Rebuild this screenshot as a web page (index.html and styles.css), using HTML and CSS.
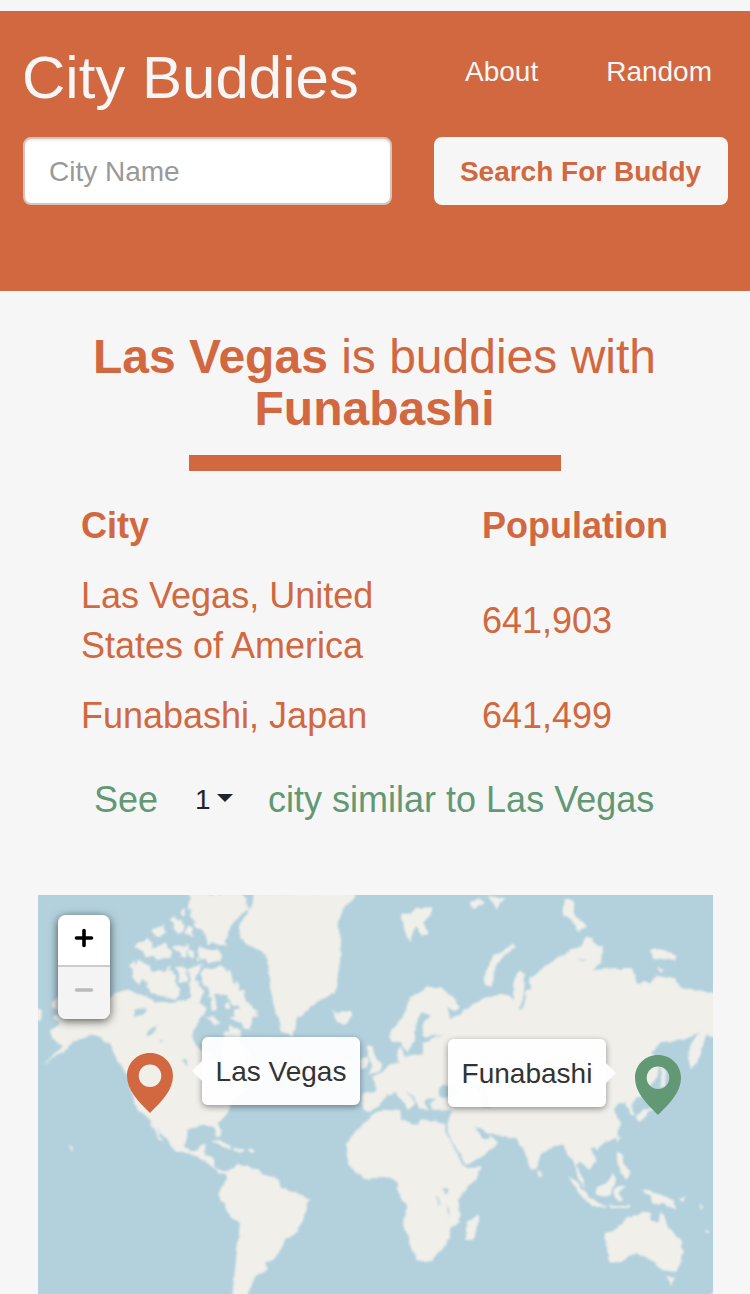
FILE: index.html
```html
<!DOCTYPE html>
<html lang="en">
<head>
<meta charset="utf-8">
<title>City Buddies</title>
<link rel="stylesheet" href="styles.css">
</head>
<body>
<header class="header">
  <div class="brand-row">
    <h1 class="brand">City Buddies</h1>
    <nav class="nav"><a class="nav-link" href="#">About</a><a class="nav-link" href="#">Random</a></nav>
  </div>
  <form class="search">
    <input class="search-input" type="text" placeholder="City Name">
    <button class="search-button" type="button">Search For Buddy</button>
  </form>
</header>
<main class="main">
  <h2 class="headline"><b>Las Vegas</b> is buddies with <b>Funabashi</b></h2>
  <hr class="rule">
  <div class="table">
    <div class="row row-head"><span>City</span><span>Population</span></div>
    <div class="row"><span class="city">Las Vegas, United States of America</span><span>641,903</span></div>
    <div class="row"><span class="city">Funabashi, Japan</span><span>641,499</span></div>
  </div>
  <div class="similar">
    <span>See</span>
    <button class="count" type="button">1<i class="caret"></i></button>
    <span>city similar to Las Vegas</span>
  </div>
  <section class="map">
    <svg class="world" viewBox="38 895 675 399" aria-hidden="true">
      <defs>
        <filter id="coast" x="0" y="880" width="750" height="430" filterUnits="userSpaceOnUse" color-interpolation-filters="sRGB">
          <feTurbulence type="fractalNoise" baseFrequency="0.12" numOctaves="2" seed="4" result="n"/>
          <feDisplacementMap in="SourceGraphic" in2="n" scale="5" xChannelSelector="R" yChannelSelector="G"/>
          <feGaussianBlur stdDeviation="0.9"/>
        </filter>
        <filter id="arctic" x="0" y="880" width="750" height="430" filterUnits="userSpaceOnUse" color-interpolation-filters="sRGB">
          <feTurbulence type="fractalNoise" baseFrequency="0.14" numOctaves="2" seed="9" result="n"/>
          <feDisplacementMap in="SourceGraphic" in2="n" scale="10" xChannelSelector="R" yChannelSelector="G"/>
          <feGaussianBlur stdDeviation="1"/>
        </filter>
      </defs>
      <rect class="sea" x="30" y="885" width="700" height="420"/>
      <g class="land" filter="url(#coast)">
        <!-- North and Central America -->
        <path d="M52 1002L62 995 80 992 97 994 110 997 118 992 126 990 138 993 151 999 160 1003 171 1003 181 1001 190 998 196 993 200 1002 206 1006 204 1014 195 1026 192 1036 195 1045 201 1050 213 1055 219 1068 223 1056 221 1046 226 1036 233 1035 245 1048 254 1062 258 1070 245 1076 240 1082 252 1088 240 1095 231 1104 228 1113 218 1123 222 1136 218 1137 213 1127 201 1125 188 1130 185 1145 191 1152 198 1150 200 1145 206 1144 205 1155 215 1158 214 1167 220 1171 228 1171 226 1174 219 1174 210 1166 205 1160 192 1156 175 1151 170 1145 168 1141 155 1127 148 1117 140 1110 135 1103 131 1090 128 1075 118 1062 115 1055 108 1043 98 1037 88 1035 80 1039 72 1043 64 1052 52 1059 43 1064 56 1053 62 1046 52 1038 51 1031 60 1024 52 1018 60 1012 50 1006Z"/>
        <path d="M36 1008l6 4-1 7-5 2zM150 1121l5 6 8 13-3-1-9-13z"/>
        <!-- Greenland and Iceland -->
        <path d="M255 893L248 913 238 926 241 940 255 948 265 953 268 962 270 987 275 1010 282 1032 292 1037 298 1018 313 1005 335 992 337 980 340 963 341 940 338 923 343 910 358 893ZM332 1010l6 5 5-4 9 0 1 5-7 8-8-1z"/>
        <!-- South America -->
        <path d="M226 1172L238 1165 256 1168 268 1177 275 1178 282 1188 293 1192 310 1200 303 1215 298 1233 285 1240 273 1261 265 1262 267 1268 260 1273 255 1277 251 1287 246 1297 232 1297 235 1270 238 1240 240 1223 230 1217 225 1207 219 1198 221 1187 227 1180Z"/>
        <!-- Caribbean and Hawaii -->
        <path d="M211 1141l9-1 11 6-1 3-11-4zM233 1148l10 1 0 4-9-1zM248 1149h5v3h-5zM69 1146l4 2-1 4z"/>
        <!-- Eurasia -->
        <path d="M390 1033L403 1017 410 997 427 987 440 987 460 1005 457 1012 447 1007 450 1018 460 1015 473 1003 484 998 501 993 514 1000 513 983 519 970 525 974 524 992 530 990 529 980 542 968 561 955 581 945 587 936 602 948 601 963 592 970 617 968 632 968 637 983 651 983 657 975 674 978 681 987 697 990 718 995 718 1037 706 1034 702 1050 697 1063 691 1070 688 1057 692 1043 700 1032 684 1040 661 1042 651 1053 660 1063 657 1078 647 1090 639 1097 631 1105 636 1115 631 1115 626 1103 616 1105 614 1110 621 1123 617 1137 601 1145 591 1148 596 1162 589 1170 581 1162 576 1164 581 1175 586 1188 579 1181 573 1160 567 1155 564 1145 554 1145 539 1157 537 1168 532 1171 524 1150 516 1138 497 1135 484 1132 477 1127 484 1138 490 1135 498 1143 484 1155 467 1165 462 1159 448 1133 447 1126 452 1110 433 1111 430 1103 438 1098 425 1100 428 1110 421 1109 413 1097 405 1089 415 1103 408 1110 400 1098 396 1092 387 1095 378 1107 368 1112 363 1110 363 1093 377 1092 375 1084 373 1077 383 1072 393 1063 398 1062 397 1050 402 1047 404 1057 423 1053 423 1043 443 1035 424 1037 421 1027 430 1015 423 1012 415 1027 415 1040 407 1053 401 1043 392 1043Z"/>
        <!-- British Isles, Novaya Zemlya and the islands of the north -->
        <path d="M368 1045l6 0 0 9 8 12-2 6-11 2 4-8-5-10zM361 1059l7-2-1 11-6 1zM484 985l2-16 8-13 20-13 2 5-15 11-8 14-1 14zM401 913l9 2 6-7 16-1 0 9-9 5 5 13-6 3-7-11-4 17-6-10zM565 898l8 4 2 14 13 10-9 6-8-13-9-5zM650 950l10-1 17 7-3 4-11-2-10 2zM657 966l7 4-4 3zM469 903l12-5 3 6-10 5zM488 896l16 2-8 11z"/>
        <!-- Africa and Madagascar -->
        <path d="M360 1127L347 1143 347 1163 363 1179 385 1177 390 1179 398 1182 398 1192 407 1207 403 1222 410 1243 417 1261 432 1260 442 1250 450 1237 450 1228 460 1222 458 1200 473 1182 481 1167 467 1168 461 1162 445 1130 446 1124 420 1120 417 1125 402 1120 400 1111 387 1110 370 1115ZM479 1214l0 9-7 18-6-1 1-17z"/>
        <!-- East Asia and Oceania -->
        <path d="M662 1062l4 9-1 16-4-1zM636 1117l7-6 10-4 4-12 5-7 4 7-5 13-12 4-9 10zM616 1137l5-1-3 8zM618 1151l5 2 0 9 7 10-3 7-7-6-3-13zM537 1171l6 4-4 3zM568 1177l9 4 13 17 12 5 6 4-14-1-12-8zM595 1189l11-5 7-10 3 6-5 15-8 2-7-3zM615 1188l11-2-8 7 5 6-5 2-4-5zM610 1205l20 0 0 3-20 0zM640 1189l9 1 7 4 16 5 5 11-12-6-12 1-2-7zM680 1199l6-3-3 6zM698 1203l6 5-2 2zM706 1228l4 5-3 0zM595 1147l5-2-3 6z"/>
        <path d="M606 1233L617 1228 627 1218 641 1213 650 1213 651 1220 657 1223 662 1211 667 1225 682 1242 683 1253 676 1272 661 1270 652 1260 637 1253 624 1260 610 1263 605 1240ZM666 1277l8 1-3 7zM718 1284l-4 8-5 3h10z"/>
      </g>
      <!-- Arctic archipelago -->
      <g class="land" filter="url(#arctic)">
        <path d="M132 965L143 960 151 970 163 972 170 967 174 980 181 993 175 999 157 996 148 990 144 980 137 984 131 977ZM136 948L147 937 152 946 161 948 164 942 171 949 171 957 160 962 148 956ZM154 932l4-7 6 0-1 10-7 3zM170 919l5-2 8 8 1 8-7 1zM187 924l6 3 0 10-6-4zM181 909l5 0 0 6-5 0zM189 893L243 893 249 906 234 922 228 936 223 945 208 943 204 934 198 928 191 916ZM175 946l13-2 0 14-8 0zM198 947l7 2 18 3-1 10-23 0zM189 950l6 1-1 8-5-1zM177 967l12-1-2 16-7 0zM190 966l11-1-4 16 6 10-1 12-14-2 3-14zM202 968L227 966 231 980 243 990 248 1003 258 1010 250 1031 242 1025 231 1018 238 1008 226 996 217 994 218 1008 210 1009 209 991 202 981ZM207 1016l6-1 8 8-5 4zM226 1002l5 1-1 5-5-1zM224 1031l10-3 6 5-2 6-13-2z"/>
      </g>
      <g class="lake" filter="url(#coast)">
        <path d="M134 1010l13-3-5 8-8 1zM148 1031l10-5-4 7-6 3zM159 1041l6-1-4 3zM183 1060l3 0 2 7-3-2zM438 1088l7-3 12 4 6 5-16 3-9-1zM478 1086l9 2 0 10 4 10-7 0-4-13zM442 1188l6 1-3 5zM436 1196l2 1 3 8-2-1zM447 1206l2 2 0 8-1-1zM579 961l7-2-3 3zM475 1126l5 2 11 7-1 4-9-2zM523 991l3 5-3 12-3 1 2-9z"/>
      </g>
    </svg>
    <div class="zoom">
      <button class="zoom-key" aria-label="Zoom in"><svg viewBox="0 0 20 20"><path d="M2.5 10h15M10 2.5v15"/></svg></button>
      <button class="zoom-key zoom-off" aria-label="Zoom out"><svg viewBox="0 0 20 20"><path d="M2.5 10h15"/></svg></button>
    </div>
    <svg class="pin pin-vegas" viewBox="0 0 46 60"><path fill-rule="evenodd" d="M23 0C10 0 0 10 0 23c0 14 11 25 23 37 12-12 23-23 23-37C46 10 36 0 23 0zm0 11.5a11.3 11.3 0 1 1 0 22.6a11.3 11.3 0 0 1 0-22.6z"/></svg>
    <svg class="pin pin-funabashi" viewBox="0 0 46 60"><path fill-rule="evenodd" d="M23 0C10 0 0 10 0 23c0 14 11 25 23 37 12-12 23-23 23-37C46 10 36 0 23 0zm0 11.5a11.3 11.3 0 1 1 0 22.6a11.3 11.3 0 0 1 0-22.6z"/></svg>
    <div class="tip tip-vegas">Las Vegas</div>
    <div class="tip tip-funabashi">Funabashi</div>
  </section>
</main>
</body>
</html>
```
FILE: styles.css
```css
* { box-sizing: border-box; }
body {
  margin: 0;
  padding-top: 11px;
  height: 1294px;
  overflow: hidden;
  background: #f6f6f6;
  color: #d16840;
  font-family: "Liberation Sans", Arial, sans-serif;
}
button, input { font: inherit; margin: 0; }
.header {
  height: 280px;
  padding: 32px 22px 0 23px;
  background: #d16840;
  color: #f6f6f6;
}
.brand-row { display: flex; justify-content: space-between; height: 94px; }
.brand { margin: 0 0 0 -1px; padding-top: 1px; font-size: 60px; font-weight: 400; line-height: 68px; white-space: nowrap; }
.nav { display: flex; gap: 68px; padding: 13px 16px 0 0; font-size: 28px; line-height: 32px; }
.nav-link { color: inherit; text-decoration: none; }
.search { display: flex; justify-content: space-between; }
.search-input {
  width: 369px;
  height: 68px;
  padding: 2px 24px 0;
  border: 2px solid #d5c3bc;
  border-radius: 8px;
  background: #fff;
  box-shadow: inset 0 2px 2px rgba(0, 0, 0, .075);
  font-size: 28px;
}
.search-input::placeholder { color: #999; opacity: 1; }
.search-button {
  width: 294px;
  height: 68px;
  padding: 2px 1px 0 0;
  border: 0;
  border-radius: 8px;
  background: #f6f6f6;
  color: #d16840;
  font-size: 28px;
  font-weight: 700;
}
.main { padding: 40px 37px 0 38px; }
.headline {
  margin: 0;
  padding-right: 2px;
  font-size: 48px;
  font-weight: 400;
  line-height: 52px;
  text-align: center;
}
.rule { width: 372px; height: 16px; margin: 20px 0 20px 151px; border: 0; background: #d16840; }
.table { padding: 0 28px 0 43px; font-size: 36px; line-height: 50px; }
.row { display: grid; grid-template-columns: 401px 1fr; align-items: center; padding: 10px 0; }
.row-head { font-weight: 700; }
.city { max-width: 330px; }
.similar {
  display: flex;
  align-items: center;
  height: 50px;
  margin-top: 24px;
  padding-left: 56px;
  color: #629874;
  font-size: 36px;
  white-space: nowrap;
}
.count {
  display: flex;
  align-items: center;
  gap: 6px;
  width: 110px;
  padding: 0 0 0 37px;
  border: 0;
  background: none;
  color: #212529;
  font-size: 28px;
}
.caret {
  border: 8px solid transparent;
  border-top-color: #212529;
  border-bottom: 0;
  margin-top: -5px;
}
.map { position: relative; height: 399px; margin-top: 70px; overflow: hidden; }
.world { display: block; width: 675px; height: 399px; }
.sea, .lake { fill: #b3d1dd; }
.land { fill: #f0efea; }
.zoom {
  position: absolute;
  left: 20px;
  top: 20px;
  width: 52px;
  height: 104px;
  border-radius: 8px;
  overflow: hidden;
  box-shadow: 0 2px 10px rgba(0, 0, 0, .65);
}
.zoom-key {
  display: flex;
  justify-content: center;
  align-items: center;
  width: 52px;
  height: 52px;
  padding: 0 0 4px;
  border: 0;
  border-bottom: 2px solid #ccc;
  background: #fff;
}
.zoom-key svg { width: 20px; height: 20px; fill: none; stroke: #000; stroke-width: 3.6; stroke-linecap: round; }
.zoom-off { padding-bottom: 6px; border-bottom: 0; background: #f4f4f4; }
.zoom-off svg { stroke: #bbb; }
.pin { position: absolute; width: 46px; height: 60px; }
.pin-vegas { left: 89px; top: 158px; fill: #d16840; }
.pin-funabashi { left: 597px; top: 160px; fill: #629874; }
.tip {
  position: absolute;
  width: 158px;
  height: 68px;
  border-radius: 6px;
  background: rgba(255, 255, 255, .93);
  box-shadow: 0 2px 6px rgba(0, 0, 0, .4);
  color: #333;
  font-size: 28px;
  line-height: 69px;
  text-align: center;
}
.tip::before { content: ""; position: absolute; top: 24px; border: 10px solid transparent; }
.tip-vegas { left: 164px; top: 142px; }
.tip-vegas::before { right: 100%; border-left: 0; border-right-color: rgba(255, 255, 255, .93); }
.tip-funabashi { left: 410px; top: 144px; }
.tip-funabashi::before { left: 100%; border-right: 0; border-left-color: rgba(255, 255, 255, .93); }
```
